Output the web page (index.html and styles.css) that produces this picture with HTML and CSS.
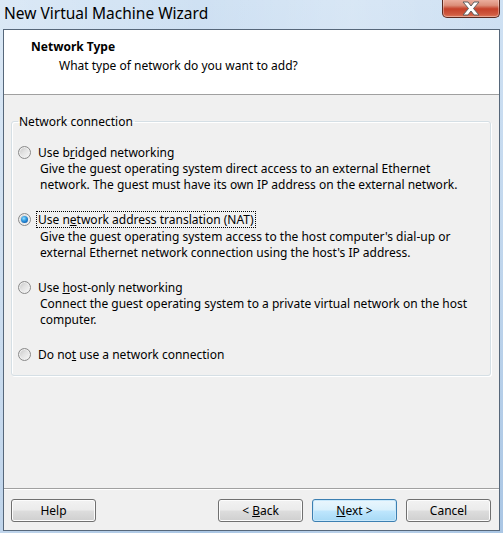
FILE: index.html
```html
<!DOCTYPE html>
<html lang="en">
<head>
<meta charset="utf-8">
<title>New Virtual Machine Wizard</title>
<link rel="stylesheet" href="styles.css">
</head>
<body>
<div class="window">
  <div class="titlebar">
    <div class="title">New Virtual Machine Wizard</div>
    <div class="close">
      <svg width="24" height="15" viewBox="0 0 24 15">
        <path d="M4 1 L9 1 L12 5 L15 1 L20 1 L14.5 7.5 L20 14 L15 14 L12 10 L9 14 L4 14 L9.5 7.5 Z" fill="#ffffff" stroke="#5e5e5e" stroke-width="1" stroke-linejoin="round"/>
      </svg>
    </div>
  </div>
  <div class="client">
    <div class="header">
      <div class="h-title">Network Type</div>
      <div class="h-sub">What type of network do you want to add?</div>
    </div>
    <div class="body">
      <fieldset class="group">
        <legend class="legend">Network connection</legend>
        <div class="option">
          <div class="opt-row">
            <span class="radio"></span>
            <span class="opt-label">Use b<u>r</u>idged networking</span>
          </div>
          <div class="opt-desc">Give the guest operating system direct access to an external Ethernet<br>network. The guest must have its own IP address on the external network.</div>
        </div>
        <div class="option">
          <div class="opt-row">
            <span class="radio checked"></span>
            <span class="opt-label focus">Use n<u>e</u>twork address translation (NAT)</span>
          </div>
          <div class="opt-desc">Give the guest operating system access to the host computer's dial-up or<br>external Ethernet network connection using the host's IP address.</div>
        </div>
        <div class="option">
          <div class="opt-row">
            <span class="radio"></span>
            <span class="opt-label">Use <u>h</u>ost-only networking</span>
          </div>
          <div class="opt-desc">Connect the guest operating system to a private virtual network on the host<br>computer.</div>
        </div>
        <div class="option last">
          <div class="opt-row">
            <span class="radio"></span>
            <span class="opt-label">Do no<u>t</u> use a network connection</span>
          </div>
        </div>
      </fieldset>
    </div>
    <div class="footer">
      <button class="btn">Help</button>
      <div class="btn-group">
        <button class="btn">&lt; <u>B</u>ack</button>
        <button class="btn default"><u>N</u>ext &gt;</button>
        <button class="btn">Cancel</button>
      </div>
    </div>
  </div>
</div>
</body>
</html>
```
FILE: styles.css
```css
* { box-sizing: border-box; }
html, body {
  margin: 0;
  padding: 0;
  width: 503px;
  height: 533px;
  overflow: hidden;
}
body {
  font-family: "Noto Sans", "Open Sans", sans-serif;
  font-size: 12px;
  color: #000;
}
.window {
  width: 503px;
  height: 533px;
  display: flex;
  flex-direction: column;
  background:
    linear-gradient(90deg, rgba(255,255,255,0.25) 0%, rgba(255,255,255,0) 40%, rgba(255,255,255,0.2) 70%, rgba(255,255,255,0) 100%),
    linear-gradient(180deg, #cfe1f3 0%, #bfd5ec 50%, #aac6e4 100%);
}
.titlebar {
  height: 29px;
  flex: none;
  display: flex;
  justify-content: space-between;
  align-items: flex-start;
  padding-left: 4px;
  padding-right: 3px;
}
.title {
  font-size: 15.5px;
  line-height: 26px;
  color: #000;
}
.close {
  width: 58px;
  height: 19px;
  margin-top: -1px;
  border: 1px solid #5a2a20;
  border-top: none;
  border-radius: 0 0 5px 5px;
  background: linear-gradient(180deg, #eeb3a4 0%, #dc8f7a 35%, #c5412a 55%, #cf5a40 85%, #e07a5c 100%);
  box-shadow: inset 0 0 0 1px rgba(255,255,255,0.35);
  display: flex;
  align-items: center;
  justify-content: center;
}
.close svg { display: block; }
.client {
  flex: 1;
  margin: 0 3px 2px 3px;
  border: 1px solid #56677a;
  background: #f0f0f0;
  display: flex;
  flex-direction: column;
}
.header {
  height: 65px;
  flex: none;
  background: #fff;
  border-bottom: 1px solid #a0a0a0;
  padding: 9px 0 0 27px;
}
.h-title {
  font-weight: bold;
  line-height: 16px;
}
.h-sub {
  line-height: 16px;
  margin-top: 3px;
  padding-left: 28px;
}
.body {
  flex: 1;
  padding: 19px 8px 0 7px;
}
.group {
  margin: 0;
  border: 1px solid #d5dfe5;
  border-radius: 3px;
  box-shadow: inset 1px 1px 0 #fff, 1px 1px 0 #fff;
  padding: 14px 6px 11px 6px;
  min-width: 0;
}
.legend {
  padding: 0 2px 0 1px;
  line-height: 15px;
  margin-left: 0;
}
.option {
  margin-bottom: 17.5px;
}
.option.last { margin-bottom: 0; }
.opt-row {
  display: flex;
  align-items: center;
  height: 18px;
}
.radio {
  width: 13px;
  height: 13px;
  border-radius: 50%;
  border: 1px solid #8a8a8a;
  background: linear-gradient(135deg, #c4c4c4 0%, #e2e2e2 45%, #f8f8f8 100%);
  box-shadow: inset 0 0 0 1px #f0f0f0;
  flex: none;
  margin-right: 6px;
  position: relative;
}
.radio.checked::after {
  content: "";
  position: absolute;
  left: 2px;
  top: 2px;
  width: 7px;
  height: 7px;
  border-radius: 50%;
  background: radial-gradient(circle at 40% 35%, #9ae0ff 0%, #3aa2e4 35%, #0c5eb3 80%, #0a3f86 100%);
}
.opt-label {
  line-height: 15px;
  padding: 0 1px;
  border: 1px dotted transparent;
  margin-left: -1px;
  white-space: nowrap;
}
.opt-label.focus {
  border-color: #000;
}
.opt-desc {
  line-height: 16px;
  padding-left: 22px;
  white-space: nowrap;
}
u { text-decoration: underline; text-underline-offset: 1px; }
.footer {
  height: 42px;
  flex: none;
  border-top: 1px solid #a0a0a0;
  box-shadow: inset 0 1px 0 #fff;
  display: flex;
  justify-content: space-between;
  align-items: flex-start;
  padding: 10px 8px 0 7px;
}
.btn-group {
  display: flex;
  gap: 9px;
}
.btn {
  width: 85px;
  height: 23px;
  font-family: inherit;
  font-size: 12px;
  color: #000;
  border: 1px solid #707070;
  border-radius: 3px;
  background: linear-gradient(180deg, #f2f2f2 0%, #ebebeb 48%, #dddddd 52%, #cfcfcf 100%);
  box-shadow: inset 0 0 0 1px #fcfcfc;
  padding: 0;
  line-height: 19px;
}
.btn.default {
  border-color: #3c7fb1;
  background: linear-gradient(180deg, #eaf6fd 0%, #d9f0fc 48%, #bee6fd 52%, #a7d9f5 100%);
  box-shadow: inset 0 0 0 1px #c8e8fb;
}
```
